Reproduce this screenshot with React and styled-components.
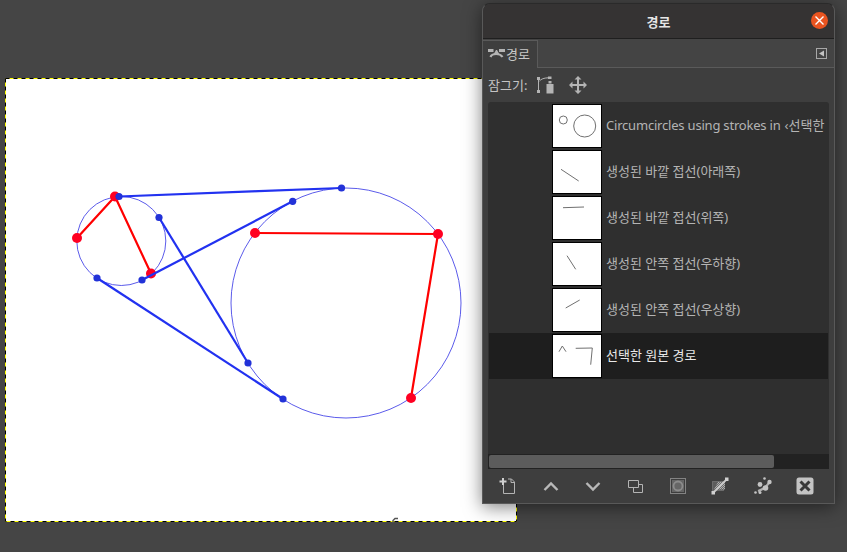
import React from 'react';
import styled, { createGlobalStyle } from 'styled-components';

const Global = createGlobalStyle`
  html, body { margin: 0; padding: 0; background: #454545; }
  body { font-family: "Noto Sans", "Noto Sans CJK KR", sans-serif; overflow: hidden; }
`;

const Desktop = styled.div`
  position: relative;
  width: 847px;
  height: 552px;
  background: #454545;
  overflow: hidden;
`;

const Sheet = styled.svg`
  position: absolute;
  left: 4px;
  top: 77px;
  width: 514px;
  height: 446px;
  display: block;
`;

const Panel = styled.section`
  position: absolute;
  left: 482px;
  top: 3px;
  width: 353px;
  height: 501px;
  box-sizing: border-box;
  display: flex;
  flex-direction: column;
  background: #3e3e3e;
  border: 1px solid #595959;
  border-top-color: #2a2a2a;
  border-radius: 8px 8px 0 0;
  box-shadow: 0 3px 18px rgba(0, 0, 0, 0.5);
  color: #c4c4c4;
  font-size: 13px;
`;

const TitleBar = styled.header`
  position: relative;
  flex: 0 0 35px;
  box-sizing: border-box;
  display: flex;
  align-items: center;
  justify-content: center;
  background: #353333;
  border-bottom: 1px solid #1f1f1f;
  border-radius: 7px 7px 0 0;
  color: #e6e6e6;
  font-weight: 700;
  font-size: 13px;
`;

const CloseButton = styled.span`
  position: absolute;
  right: 6px;
  top: 8px;
  width: 17px;
  height: 17px;
  border-radius: 50%;
  background: #e95420;
  display: flex;
  align-items: center;
  justify-content: center;
`;

const TabStrip = styled.div`
  flex: 0 0 29px;
  display: flex;
  align-items: stretch;
  justify-content: space-between;
  background: #444444;
  border-bottom: 1px solid #5a5a5a;
  box-sizing: border-box;
`;

const Tab = styled.div`
  width: 55px;
  box-sizing: border-box;
  margin-top: 1px;
  margin-bottom: -1px;
  padding-left: 5px;
  padding-bottom: 2px;
  display: flex;
  align-items: center;
  gap: 1px;
  background: #3e3e3e;
  border: 1px solid #5a5a5a;
  border-left: none;
  border-bottom: none;
  color: #c8c8c8;
`;

const TabMenu = styled.svg`
  width: 11px;
  height: 11px;
  align-self: center;
  margin-right: 7px;
`;

const LockRow = styled.div`
  flex: 0 0 34px;
  display: flex;
  align-items: center;
  padding-left: 5px;
  color: #c4c4c4;
`;

const LockLabel = styled.span`
  width: 48px;
  padding-bottom: 2px;
`;

const LockIcon = styled.svg`
  width: 18px;
  height: 18px;
  margin-right: ${p => p.$gap || 0}px;
  display: block;
`;

const List = styled.div`
  flex: 0 0 352px;
  margin: 0 5px;
  padding: 1px 1px 0;
  box-sizing: border-box;
  background: #2f2f2f;
  border-radius: 3px 3px 0 0;
  overflow: hidden;
`;

const Row = styled.div`
  height: 46px;
  display: flex;
  align-items: center;
  padding-left: 63px;
  background: ${p => (p.$selected ? '#1e1e1e' : 'transparent')};
  color: ${p => (p.$selected ? '#e8e8e8' : '#b4b4b4')};
  white-space: nowrap;
  overflow: hidden;
`;

const Thumb = styled.svg`
  flex: 0 0 50px;
  width: 50px;
  height: 44px;
  box-sizing: border-box;
  background: #fff;
  border: 1px solid #000;
  margin-right: 4px;
`;

const RowLabel = styled.span`
  padding-bottom: 3px;
`;

const Latin = styled.span`
  letter-spacing: -0.2px;
  margin-right: 4px;
`;

const Scrollbar = styled.div`
  flex: 0 0 15px;
  margin: 0 5px;
  padding: 1px;
  box-sizing: border-box;
  background: #222222;
`;

const ScrollThumb = styled.div`
  height: 13px;
  width: 285px;
  border-radius: 2px;
  background: #5c5c5c;
`;

const Toolbar = styled.div`
  flex: 1;
  display: grid;
  grid-template-columns: repeat(8, 42.4px);
  margin-left: 4px;
  align-items: center;
  justify-items: center;
`;

const ToolIcon = styled.svg`
  width: 18px;
  height: 18px;
  display: block;
`;

const rows = [
  { key: 'c', label: <><Latin>Circumcircles using strokes in</Latin>‹선택한</>, art: <g fill="none"><circle cx="11.3" cy="16" r="4" /><circle cx="32.7" cy="22" r="11" /></g> },
  { key: 'a', label: '생성된 바깥 접선(아래쪽)', art: <line x1="9" y1="19.3" x2="26.7" y2="31" /> },
  { key: 'b', label: '생성된 바깥 접선(위쪽)', art: <line x1="11" y1="11.7" x2="32" y2="11" /> },
  { key: 'd', label: '생성된 안쪽 접선(우하향)', art: <line x1="15" y1="13.7" x2="23.7" y2="27.3" /> },
  { key: 'e', label: '생성된 안쪽 접선(우상향)', art: <line x1="13.7" y1="20" x2="27.7" y2="12" /> },
  { key: 'f', label: '선택한 원본 경로', selected: true, art: <g fill="none"><polyline points="7,17.7 10.3,12 14,17.7" /><polyline points="23.7,14.3 40.3,14 38.7,30.7" /></g> },
];

const redPoints = [[77, 238], [115, 196.5], [151, 273.5], [255, 233], [438, 234], [411, 398]];
const bluePoints = [[119, 196.5], [341.5, 188], [159, 217.5], [248, 363], [142, 280], [292.7, 201.3], [97, 278], [283, 399]];

const Canvas = () => (
  <Sheet viewBox="4 77 514 446" aria-hidden="true">
    <defs>
      <filter id="soft" x="-5%" y="-5%" width="110%" height="110%">
        <feGaussianBlur stdDeviation="0.45" />
      </filter>
    </defs>
    <rect x="5" y="78" width="512" height="444" fill="#fff" />
    <g fill="none">
      <circle cx="121.3" cy="241" r="44.5" stroke="#4848e8" strokeWidth="0.9" />
      <circle cx="346" cy="303" r="115" stroke="#4848e8" strokeWidth="0.9" />
    </g>
    <g filter="url(#soft)">
      <g stroke="#ff0000" strokeWidth="2.2" fill="none">
        <polyline points="77,238 115,196.5 151,273.5" />
        <polyline points="255,233 438,234 411,398" />
      </g>
      {redPoints.map(([x, y]) => <circle key={`${x}-${y}`} cx={x} cy={y} r="5" fill="#ff0022" />)}
      <g stroke="#2030f0" strokeWidth="2.2">
        <line x1="119" y1="196.5" x2="341.5" y2="188" />
        <line x1="159" y1="217.5" x2="248" y2="363" />
        <line x1="142" y1="280" x2="292.7" y2="201.3" />
        <line x1="97" y1="278" x2="283" y2="399" />
      </g>
      {bluePoints.map(([x, y]) => <circle key={`${x}-${y}`} cx={x} cy={y} r="3.6" fill="#2030d8" />)}
    </g>
    <rect x="5.5" y="78.5" width="511" height="443" fill="none" stroke="#ffff00" strokeWidth="1" />
    <rect x="5.5" y="78.5" width="511" height="443" fill="none" stroke="#000" strokeWidth="1" strokeDasharray="4 4" />
    <path d="M398 518.5h-3l-2 2v3l2 2h3" fill="none" stroke="#555" strokeWidth="1.4" />
  </Sheet>
);

const ic = '#b4b4b4';

const App = () => (
  <Desktop>
    <Global />
    <Canvas />
    <Panel>
      <TitleBar>
        경로
        <CloseButton>
          <svg width="11" height="11" viewBox="0 0 11 11"><path d="M1.5 1.5l8 8M9.5 1.5l-8 8" stroke="#fff" strokeWidth="1.4" /></svg>
        </CloseButton>
      </TitleBar>
      <TabStrip>
        <Tab>
          <svg width="17" height="11" viewBox="0 0 17 11" fill="none">
            <path d="M0 2.5h5.5M11 2.5h6" stroke={ic} strokeWidth="3" />
            <path d="M2.5 9C4 5 12 5 14.5 9" stroke={ic} strokeWidth="2.2" />
            <path d="M5.5 6.5L8 2h1l2.5 4.5z" fill={ic} />
          </svg>
          경로
        </Tab>
        <TabMenu viewBox="0 0 11 11">
          <rect x="0.5" y="0.5" width="10" height="10" fill="none" stroke="#a8a8a8" />
          <path d="M8 2.5v6L3 5.5z" fill="#c4c4c4" />
        </TabMenu>
      </TabStrip>
      <LockRow>
        <LockLabel>잠그기:</LockLabel>
        <LockIcon viewBox="0 0 18 18" $gap={15}>
          <g fill={ic}>
            <rect x="1" y="1" width="3" height="3" />
            <rect x="1" y="14" width="3" height="3" />
            <rect x="12" y="0.5" width="3.5" height="2.5" />
            <rect x="10.5" y="8" width="7" height="9.5" />
            <rect x="12.5" y="5" width="3" height="2.5" />
          </g>
          <path d="M2.5 4v10M3.5 5C5 3 8 2 12 1.8" fill="none" stroke={ic} />
        </LockIcon>
        <LockIcon viewBox="0 0 18 18">
          <path d="M9 1v16M1 9h16" stroke={ic} strokeWidth="2" />
          <path d="M9 0l3.5 3.5h-7zM9 18l-3.5-3.5h7zM0 9l3.5-3.5v7zM18 9l-3.5 3.5v-7z" fill={ic} />
        </LockIcon>
      </LockRow>
      <List>
        {rows.map(r => (
          <Row key={r.key} $selected={r.selected}>
            <Thumb viewBox="1 1 48 42" stroke="#707070" strokeWidth="1">{r.art}</Thumb>
            <RowLabel>{r.label}</RowLabel>
          </Row>
        ))}
      </List>
      <Scrollbar><ScrollThumb /></Scrollbar>
      <Toolbar>
        <ToolIcon viewBox="0 0 18 18" fill="none">
          <path d="M4.5 8v8.5h11V5l-3-3H9" stroke={ic} />
          <path d="M12 2v3.5h3.5" stroke={ic} />
          <path d="M4 1v7M0.5 4.5h7" stroke="#d0d0d0" strokeWidth="2" />
        </ToolIcon>
        <ToolIcon viewBox="0 0 18 18" fill="none"><path d="M2.5 13L9 6.5 15.5 13" stroke="#b8b8b8" strokeWidth="2.4" /></ToolIcon>
        <ToolIcon viewBox="0 0 18 18" fill="none"><path d="M2.5 6L9 12.5 15.5 6" stroke="#b8b8b8" strokeWidth="2.4" /></ToolIcon>
        <ToolIcon viewBox="0 0 18 18" fill="none">
          <path d="M2.5 3.5h10v7h-10z" stroke={ic} />
          <path d="M12.5 7.5h4v8h-9v-5" stroke={ic} />
        </ToolIcon>
        <ToolIcon viewBox="0 0 18 18" fill="none">
          <rect x="1.5" y="1.5" width="15" height="15" stroke="#c8c8c8" strokeDasharray="1 1" />
          <rect x="3" y="3" width="12" height="12" fill="#666" />
          <circle cx="9" cy="9" r="4.5" stroke="#8c8c8c" strokeWidth="1.8" />
        </ToolIcon>
        <ToolIcon viewBox="0 0 18 18" fill="none">
          <defs>
            <pattern id="chk" width="2" height="2" patternUnits="userSpaceOnUse">
              <rect width="2" height="2" fill="#6a6a6a" />
              <rect width="1" height="1" fill="#b0b0b0" />
              <rect x="1" y="1" width="1" height="1" fill="#b0b0b0" />
            </pattern>
          </defs>
          <rect x="1.5" y="4.5" width="11" height="9" fill="#5c5c5c" stroke="#8c8c8c" strokeDasharray="1 1" />
          <path d="M7 5h7v7.5H3z" fill="url(#chk)" />
          <path d="M2 16L16 2" stroke="#c8c8c8" strokeWidth="1.8" />
          <rect x="14" y="0.5" width="3.5" height="3.5" fill="#d0d0d0" />
          <rect x="0.5" y="14" width="3.5" height="3.5" fill="#d0d0d0" />
        </ToolIcon>
        <ToolIcon viewBox="0 0 18 18" fill="none">
          <path d="M4 14C8 13 12 11 15.5 5" stroke="#b0b0b0" strokeWidth="2.2" />
          <circle cx="11.5" cy="11" r="2.8" fill="#c4c4c4" />
          <circle cx="6" cy="7.5" r="2.4" fill="#c4c4c4" />
          <circle cx="15.5" cy="5" r="2.2" fill="#c4c4c4" />
          <circle cx="10.5" cy="1.5" r="1.3" fill="#c4c4c4" />
          <circle cx="1.5" cy="15.5" r="1.3" fill="#c4c4c4" />
          <circle cx="6" cy="15.5" r="1.5" fill="#c4c4c4" />
        </ToolIcon>
        <ToolIcon viewBox="0 0 18 18" fill="none">
          <rect x="0.5" y="0.5" width="17" height="17" rx="2.5" fill="#c4c4c4" />
          <path d="M4.5 4.5l9 9M13.5 4.5l-9 9" stroke="#3a3a3a" strokeWidth="3" />
        </ToolIcon>
      </Toolbar>
    </Panel>
  </Desktop>
);

export default App;
